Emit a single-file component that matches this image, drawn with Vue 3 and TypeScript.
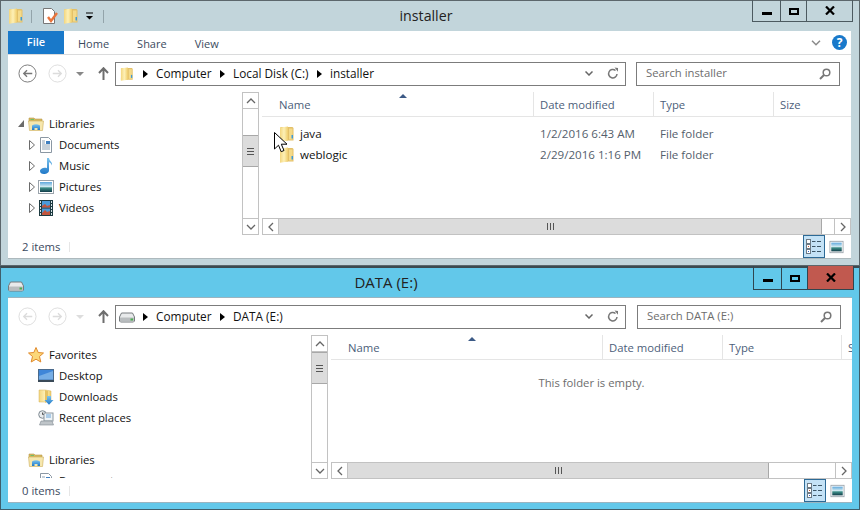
<script setup lang="ts">
interface Row { label: string; icon: string; level: 0 | 1; expander?: 'open' | 'closed'; gap?: boolean }
interface Win {
  id: string; title: string; quick: boolean; crumbIcon: string; crumbs: string[]; search: string;
  tree: Row[]; status: string; emptyMsg: string;
  files: { name: string; date: string; type: string }[];
  columns: string[]; forwardOnly: boolean;
}
const libs: Row[] = [
  { label: 'Libraries', icon: 'i-lib', level: 0, expander: 'open' },
  { label: 'Documents', icon: 'i-doc', level: 1, expander: 'closed' },
  { label: 'Music', icon: 'i-music', level: 1, expander: 'closed' },
  { label: 'Pictures', icon: 'i-pic', level: 1, expander: 'closed' },
  { label: 'Videos', icon: 'i-video', level: 1, expander: 'closed' },
];
const windows: Win[] = [
  {
    id: 'w1', title: 'installer', quick: true, crumbIcon: 'i-folder',
    crumbs: ['Computer', 'Local Disk (C:)', 'installer'], search: 'Search installer',
    tree: libs, status: '2 items', emptyMsg: '',
    files: [
      { name: 'java', date: '1/2/2016 6:43 AM', type: 'File folder' },
      { name: 'weblogic', date: '2/29/2016 1:16 PM', type: 'File folder' },
    ],
    columns: ['Name', 'Date modified', 'Type', 'Size'], forwardOnly: true,
  },
  {
    id: 'w2', title: 'DATA (E:)', quick: false, crumbIcon: 'i-drive',
    crumbs: ['Computer', 'DATA (E:)'], search: 'Search DATA (E:)',
    tree: [
      { label: 'Favorites', icon: 'i-star', level: 0 },
      { label: 'Desktop', icon: 'i-desktop', level: 1 },
      { label: 'Downloads', icon: 'i-down', level: 1 },
      { label: 'Recent places', icon: 'i-recent', level: 1 },
      { label: 'Libraries', icon: 'i-lib', level: 0, gap: true },
      { label: 'Documents', icon: 'i-doc', level: 1 },
    ],
    status: '0 items', emptyMsg: 'This folder is empty.', files: [],
    columns: ['Name', 'Date modified', 'Type', 'S'], forwardOnly: false,
  },
];
</script>

<template>
  <div class="desktop">
    <svg class="defs" aria-hidden="true">
      <defs>
        <linearGradient id="gf" x1="0" y1="0" x2="1" y2="0">
          <stop offset="0" stop-color="#f3d67f" /><stop offset=".5" stop-color="#fdf0b6" /><stop offset="1" stop-color="#efcd6c" />
        </linearGradient>
        <linearGradient id="gb" x1="0" y1="0" x2="0" y2="1">
          <stop offset="0" stop-color="#7cc4ee" /><stop offset="1" stop-color="#1f78c8" />
        </linearGradient>
        <linearGradient id="gl" x1="0" y1="0" x2="0" y2="1">
          <stop offset="0" stop-color="#5ea8dc" /><stop offset=".45" stop-color="#cfe8f0" /><stop offset=".6" stop-color="#3e8f88" /><stop offset="1" stop-color="#123d4a" />
        </linearGradient>
      </defs>
      <symbol id="i-folder" viewBox="0 0 16 16">
        <path d="M1.500 1h12l1 1v12.500h-13.500z" fill="#e3c068" />
        <path d="M1 1.500 9 .5V14.500l-8 1.200z" fill="url(#gf)" />
        <path d="M10 2.500h3.500v11H10z" fill="#f4da8a" />
        <path d="M12.500 9h1.500v3.500h-1.500z" fill="#3d9ad8" />
      </symbol>
      <symbol id="i-lib" viewBox="0 0 16 16">
        <path d="M1 2h5l1 1h7v3H1z" fill="#d9b860" stroke="#b99a4c" stroke-width=".6" />
        <path d="M2.500 3h3.500v1H2.500z" fill="#6fbf6a" />
        <path d="M.5 5h15l-1 9.500H1.500z" fill="#f6e7ae" stroke="#cfae5a" stroke-width=".6" />
        <path d="M4 9.500q4-2.500 8 0v4.500h-2.500v-2h-3v2H4z" fill="url(#gb)" />
      </symbol>
      <symbol id="i-doc" viewBox="0 0 16 16">
        <path d="M2.500 .5h8l3 3v12h-11z" fill="#fff" stroke="#8b97a3" />
        <path d="M4 4h3M4 6h3M4 8h8M4 10h8M4 12h8" stroke="#8fa3b5" fill="none" />
        <rect x="8" y="4" width="4" height="3" fill="#3f7fc0" />
      </symbol>
      <symbol id="i-music" viewBox="0 0 16 16">
        <path d="M9 0h2c.3 3 3.500 3.500 3 7.500-.6-2-2-3-3-3.200V12.500c0 2-2.500 3.500-5 3.500S2 14.700 2 13s2.500-3.200 5-3.200c.8 0 1.500.1 2 .4z" fill="url(#gb)" />
      </symbol>
      <symbol id="i-pic" viewBox="0 0 16 16">
        <rect x=".5" y="1.500" width="15" height="13" fill="#fff" stroke="#9aa3ab" />
        <rect x="2" y="3" width="12" height="10" fill="url(#gl)" />
      </symbol>
      <symbol id="i-video" viewBox="0 0 16 16">
        <rect x="1" y="0" width="14" height="16" fill="#1d3a40" />
        <path d="M2 1h1v2H2zM2 4h1v2H2zM2 7h1v2H2zM2 10h1v2H2zM2 13h1v2H2zM13 1h1v2h-1zM13 4h1v2h-1zM13 7h1v2h-1zM13 10h1v2h-1zM13 13h1v2h-1z" fill="#d5e3e8" />
        <rect x="4" y="1" width="8" height="6.500" fill="#4b9ad8" />
        <rect x="4" y="8.500" width="8" height="6.500" fill="#4b9ad8" />
        <path d="M4 6l3-2 2 2 3-1v2.500H4zM4 13l3-3 2 2 3-1v4H4z" fill="#c2553d" />
      </symbol>
      <symbol id="i-star" viewBox="0 0 16 16">
        <path d="M8 .5l2.200 5 5.300.5-4 3.500 1.300 5.500L8 12.200 3.200 15l1.300-5.500-4-3.500 5.300-.5z" fill="#fbd778" stroke="#e08a2c" />
      </symbol>
      <symbol id="i-desktop" viewBox="0 0 16 16">
        <rect x="0" y="1" width="16" height="12" fill="#4a6a8c" />
        <rect x="1" y="2" width="14" height="9.500" fill="#3f86d8" />
        <path d="M1 8 15 3v8.500H1z" fill="#76aee6" />
        <rect x="0" y="12" width="16" height="2" fill="#3a4a58" />
      </symbol>
      <symbol id="i-down" viewBox="0 0 16 16">
        <path d="M1 1h6l6 1v11H1z" fill="url(#gf)" stroke="#d5b25a" stroke-width=".5" />
        <path d="M7 1l3 1v10l-3 2z" fill="#e5c264" />
        <path d="M9 7h4v4h2.500L11 15.800 6.500 11H9z" fill="url(#gb)" />
      </symbol>
      <symbol id="i-recent" viewBox="0 0 16 16">
        <circle cx="4.500" cy="4.500" r="3.800" fill="#e9ecee" stroke="#7f8a92" />
        <path d="M4.500 2.500v2h2" stroke="#555" fill="none" />
        <rect x="6" y="3" width="9" height="8" fill="#eef3f6" stroke="#8d98a0" />
        <path d="M8 5h5M8 7h5" stroke="#6aa4d8" />
        <path d="M3 11h11l1.500 4H1.500z" fill="#bfc5c9" stroke="#7f8a92" stroke-width=".6" />
      </symbol>
      <symbol id="i-drive" viewBox="0 0 16 12">
        <path d="M2.500 2h11l2 4v4l-1 1H1.500l-1-1V6z" fill="#e8eaeb" stroke="#767b7e" />
        <rect x="1" y="6.500" width="14" height="4" fill="#b9bdbf" />
        <rect x="11.500" y="7.500" width="2.500" height="2" fill="#4caf50" />
      </symbol>
      <symbol id="i-details" viewBox="0 0 16 16">
        <g fill="#fff" stroke="#6d7a85"><rect x=".5" y=".5" width="4" height="4" /><rect x=".5" y="5.500" width="4" height="4" /><rect x=".5" y="10.500" width="4" height="4" /></g>
        <path d="M6 2.500h3.500M11 2.500h4M6 7.500h3.500M11 7.500h4M6 12.500h3.500M11 12.500h4" stroke="#3d5566" fill="none" />
        <rect x="2" y="7" width="1" height="1" fill="#c8552f" /><rect x="2" y="12" width="1" height="1" fill="#2f62c8" />
      </symbol>
    </svg>

    <section v-for="w in windows" :key="w.id" class="win" :class="w.id">
      <header class="titlebar">
        <div class="lead">
          <template v-if="w.quick">
            <svg class="ico qf"><use href="#i-folder" /></svg>
            <i class="qsep"></i>
            <svg class="qdoc" viewBox="0 0 16 16">
              <path d="M1.500 .5h8l3 3v12h-11z" fill="#fff" stroke="#777" />
              <path d="M6 9l3 4 6-8" fill="none" stroke="#e8743c" stroke-width="2.400" />
            </svg>
            <svg class="ico qf2"><use href="#i-folder" /></svg>
            <svg class="qmenu" viewBox="0 0 9 8"><path d="M1 1h7" stroke="#000" /><path d="M1 4h7L4.500 7.500z" fill="#000" /></svg>
            <i class="qsep last"></i>
          </template>
          <svg v-else class="tdrive"><use href="#i-drive" /></svg>
        </div>
        <h1 class="title">{{ w.title }}</h1>
        <div class="controls">
          <button class="cb min" aria-label="Minimize"><i></i></button>
          <button class="cb max" aria-label="Maximize"><i></i></button>
          <button class="cb close" aria-label="Close">
            <svg viewBox="0 0 10 9" width="10" height="9"><path d="M1 .5l8 8M9 .5l-8 8" stroke="#000" stroke-width="2.200" /></svg>
          </button>
        </div>
      </header>

      <div class="client">
        <nav v-if="w.quick" class="ribbon">
          <span class="tab file">File</span>
          <span class="tab">Home</span>
          <span class="tab">Share</span>
          <span class="tab">View</span>
          <svg class="rchev" viewBox="0 0 10 6"><path d="M1 .8l4 4 4-4" fill="none" stroke="#8a8a8a" stroke-width="1.500" /></svg>
          <span class="help">?</span>
        </nav>

        <div class="navbar">
          <svg class="navbtn" viewBox="0 0 20 20">
            <circle cx="10" cy="10" r="9" fill="#fff" :stroke="w.forwardOnly ? '#777' : '#dcdcdc'" />
            <path d="M15 10H6M9.500 6.500 6 10l3.500 3.500" fill="none" :stroke="w.forwardOnly ? '#777' : '#dcdcdc'" stroke-width="1.400" />
          </svg>
          <svg class="navbtn fwd" viewBox="0 0 20 20">
            <circle cx="10" cy="10" r="9" fill="#fff" stroke="#dcdcdc" />
            <path d="M5 10h9M10.500 6.500 14 10l-3.500 3.500" fill="none" stroke="#dcdcdc" stroke-width="1.400" />
          </svg>
          <svg class="drop" viewBox="0 0 8 4"><path d="M0 0h8L4 4z" :fill="w.forwardOnly ? '#888' : '#ddd'" /></svg>
          <svg class="upbtn" viewBox="0 0 11 13"><path d="M5.500 13V2M1 6l4.500-4.800L10 6" fill="none" stroke="#6e6e6e" stroke-width="2" /></svg>
          <div class="address">
            <svg class="addr-ico"><use :href="'#' + w.crumbIcon" /></svg>
            <template v-for="c in w.crumbs" :key="c">
              <i class="crumb-arrow"></i><span class="crumb">{{ c }}</span>
            </template>
            <span class="spacer"></span>
            <svg class="addr-chev" viewBox="0 0 8 5"><path d="M.5.500l3.500 3.500 3.500-3.500" fill="none" stroke="#666" stroke-width="1.500" /></svg>
            <svg class="refresh" viewBox="0 0 12 13"><path d="M10 7a4.200 4.200 0 1 1-1.500-3.500" fill="none" stroke="#777" stroke-width="1.500" /><path d="M7.500 .5 11 1v3.800z" fill="#777" /></svg>
          </div>
          <div class="search">
            <span>{{ w.search }}</span>
            <svg viewBox="0 0 12 12" width="12" height="12"><circle cx="7.500" cy="4.500" r="3.300" fill="none" stroke="#777" stroke-width="1.500" /><path d="M5 7l-4 4" stroke="#777" stroke-width="2" /></svg>
          </div>
        </div>

        <div class="main">
          <aside class="tree">
            <div v-for="r in w.tree" :key="r.label + r.level" class="node" :class="['lv' + r.level, { gap: r.gap }]">
              <svg v-if="r.expander" class="exp" :class="r.expander" viewBox="0 0 6 10">
                <path v-if="r.expander === 'closed'" d="M.5.500 5.500 5 .5 9.500z" fill="#fff" stroke="#6b6b6b" />
                <path v-else d="M0 8h6V1z" fill="#6b6b6b" />
              </svg>
              <svg class="ico"><use :href="'#' + r.icon" /></svg>
              <span>{{ r.label }}</span>
            </div>
          </aside>

          <div class="vscroll">
            <div class="sbtn"><svg viewBox="0 0 10 6" width="10" height="6"><path d="M1 5l4-4 4 4" fill="none" stroke="#666" stroke-width="1.300" /></svg></div>
            <div class="vtrack"><div class="vthumb"><i></i><i></i><i></i></div></div>
            <div class="sbtn"><svg viewBox="0 0 10 6" width="10" height="6"><path d="M1 1l4 4 4-4" fill="none" stroke="#666" stroke-width="1.300" /></svg></div>
          </div>

          <div class="pane">
            <div class="columns">
              <span v-for="c in w.columns" :key="c" class="col">{{ c }}</span>
              <i class="sort"></i>
            </div>
            <div class="files">
              <div v-for="f in w.files" :key="f.name" class="file-row">
                <span class="fname"><svg class="ico"><use href="#i-folder" /></svg>{{ f.name }}</span>
                <span class="meta">{{ f.date }}</span>
                <span class="meta">{{ f.type }}</span>
              </div>
              <p v-if="w.emptyMsg" class="empty">{{ w.emptyMsg }}</p>
            </div>
            <div class="hscroll">
              <div class="hbtn"><svg viewBox="0 0 6 10" width="6" height="10"><path d="M5 1 1 5l4 4" fill="none" stroke="#666" stroke-width="1.300" /></svg></div>
              <div class="hthumb"><i></i><i></i><i></i></div>
              <div class="hrest"></div>
              <div class="hbtn"><svg viewBox="0 0 6 10" width="6" height="10"><path d="M1 1l4 4-4 4" fill="none" stroke="#666" stroke-width="1.300" /></svg></div>
            </div>
          </div>
        </div>

        <footer class="status">
          <span class="count">{{ w.status }}</span>
          <i class="stsep"></i>
          <span class="spacer"></span>
          <span class="view on"><svg width="16" height="16"><use href="#i-details" /></svg></span>
          <span class="view"><svg width="15" height="14"><use href="#i-pic" /></svg></span>
        </footer>
      </div>

      <svg v-if="w.quick" class="cursor" viewBox="0 0 13 21" width="13" height="21">
        <path d="M.5.500V17l4-3.800 2.700 6.500 2.800-1.200-2.700-6.300H13z" fill="#fff" stroke="#000" />
      </svg>
    </section>
  </div>
</template>

<style>
html, body { margin: 0; background: #fff; }
</style>

<style scoped>
.desktop { position: relative; width: 860px; height: 510px; overflow: hidden; font-family: "Open Sans", "Noto Sans", sans-serif; font-size: 11.300px; color: #111; }
.defs { position: absolute; width: 0; height: 0; }
.ico { width: 16px; height: 16px; flex: none; }
.spacer { flex: 1; }

.win { position: absolute; left: 0; width: 860px; box-sizing: border-box; display: flex; flex-direction: column; border: 1px solid #5c676c; }
.w1 { top: 0; height: 266px; background: #c2d5db; padding: 0 8px 6px 7px; }
.w2 { top: 266px; height: 244px; background: #62c8ea; border-color: #3f5f6c; border-top: 2px solid #3b4a50; padding: 0 7px 6px 7px; }

.titlebar { display: flex; align-items: flex-start; flex: none; }
.w1 .titlebar { height: 30px; }
.w2 .titlebar { height: 29px; }
.lead { display: flex; align-items: center; flex: none; }
.w1 .lead { width: 92px; height: 30px; }
.w2 .lead { width: 11px; height: 29px; }
.qsep { width: 1px; height: 13px; flex: none; background: #93a4aa; margin: 0 10px 0 7px; }
.qsep.last { margin: 0 0 0 9px; }
.qdoc { width: 16px; height: 16px; flex: none; }
.qf2 { margin-left: 5px; }
.qmenu { width: 9px; height: 8px; margin-left: 6px; flex: none; }
.tdrive { width: 16px; height: 12px; flex: none; margin: 6px 0 0 0; }
.title { flex: 1; margin: 0; text-align: center; font-weight: 400; font-size: 14.200px; color: #222; line-height: 30px; }
.w2 .title { line-height: 29px; font-size: 15px; }

.controls { display: flex; flex: none; margin-top: -1px; border: 1px solid #4c5a60; border-top: none; }
.w1 .controls { margin-right: -2px; height: 21px; }
.w2 .controls { margin-top: -2px; margin-right: -2px; height: 23px; border-color: #2f4650; }
.cb { display: flex; align-items: center; justify-content: center; padding: 0; margin: 0; background: transparent; border: none; border-right: 1px solid #4c5a60; }
.w2 .cb { border-right-color: #2f4650; }
.cb.min { width: 28px; }
.cb.max { width: 26px; }
.cb.close { width: 45px; border-right: none; }
.w2 .cb.close { background: #c1594f; }
.min i { display: block; width: 10px; height: 3px; background: #000; margin-top: 6px; }
.max i { display: block; width: 6px; height: 3px; border: 2px solid #000; margin-top: 1px; }

.client { flex: 1; min-height: 0; display: flex; flex-direction: column; background: #fff; border-bottom: 1px solid #adb9bd; }
.w2 .client { border-top: 1px solid #9ab4c0; border-bottom-color: #9ab4c0; }

.ribbon { height: 23px; flex: none; display: flex; align-items: center; border-bottom: 1px solid #dadbdc; color: #3b4a5e; font-size: 11px; }
.tab { padding: 1px 14px 0; }
.tab.file { width: 56px; height: 23px; box-sizing: border-box; padding: 0; text-align: center; line-height: 22px; background: #1979ca; color: #fff; font-weight: 600; }
.rchev { width: 10px; height: 6px; margin-left: auto; }
.help { width: 15px; height: 15px; margin: 0 4px 0 11px; border-radius: 50%; background: #1979ca; color: #fff; font-weight: 700; font-size: 12px; line-height: 15px; text-align: center; }

.navbar { height: 37px; flex: none; display: flex; align-items: center; }
.navbtn { width: 19px; height: 19px; flex: none; margin-left: 10px; }
.navbtn.fwd { margin-left: 11px; }
.drop { width: 8px; height: 4px; flex: none; margin-left: 9px; }
.upbtn { width: 11px; height: 13px; flex: none; margin-left: 14px; }
.address { width: 511px; height: 24px; box-sizing: border-box; margin-left: 6px; flex: none; display: flex; align-items: center; background: #fff; border: 1px solid #7c7c7c; padding-left: 4px; }
.w2 .address { padding-left: 3px; }
.addr-ico { width: 14px; height: 16px; flex: none; }
.w2 .addr-ico { width: 16px; height: 12px; }
.crumb { font-size: 11.800px; margin-top: -2px; }
.crumb-arrow { width: 0; height: 0; flex: none; margin: 0 8px 0 9px; border-left: 5px solid #000; border-top: 4px solid transparent; border-bottom: 4px solid transparent; }
.w2 .crumb-arrow { margin-left: 8px; }
.crumb + .crumb-arrow, .w2 .crumb + .crumb-arrow { margin-left: 8.500px; }
.addr-chev { width: 8px; height: 5px; flex: none; margin-right: 14px; }
.refresh { width: 12px; height: 13px; flex: none; margin-right: 6px; }
.search { width: 204px; height: 24px; box-sizing: border-box; margin-left: 10px; flex: none; display: flex; align-items: center; justify-content: space-between; border: 1px solid #7c7c7c; padding: 0 8px 0 9px; color: #6d6d6d; }
.search span { margin-top: -2px; }
.w2 .search { margin-left: 11px; }

.main { flex: 1; min-height: 0; display: flex; }
.tree { flex: none; overflow: hidden; box-sizing: border-box; }
.w1 .tree { width: 234px; padding-top: 21px; }
.w2 .tree { width: 303px; padding-top: 9px; margin-bottom: 1px; }
.node { height: 21px; display: flex; align-items: center; position: relative; }
.node.lv0 { padding-left: 20px; }
.node.lv1 { padding-left: 30px; }
.node.gap { margin-top: 21px; }
.node .ico { margin-right: 5px; }
.exp { position: absolute; width: 6px; height: 10px; }
.lv0 .exp { left: 10px; }
.lv1 .exp { left: 21px; }

.vscroll { width: 17px; flex: none; box-sizing: border-box; display: flex; flex-direction: column; border-left: 1px solid #c2c2c2; border-right: 1px solid #c2c2c2; }
.sbtn { height: 17px; flex: none; box-sizing: border-box; display: flex; align-items: center; justify-content: center; border-top: 1px solid #c2c2c2; border-bottom: 1px solid #c2c2c2; }
.vtrack { flex: 1; }
.vthumb { height: 32px; margin: 26px 0 0; box-sizing: border-box; background: #dcdcdc; border-top: 1px solid #a8a8a8; border-bottom: 1px solid #a8a8a8; display: flex; flex-direction: column; align-items: center; justify-content: center; gap: 2px; }
.w2 .vthumb { margin-top: 0; }
.vthumb i { width: 7px; height: 1px; background: #555; }

.pane { flex: 1; min-width: 0; margin-left: 3px; display: flex; flex-direction: column; position: relative; }
.columns { height: 25px; flex: none; box-sizing: border-box; display: grid; border-bottom: 1px solid #e5e5e5; color: #4c607a; overflow: hidden; }
.w1 .columns, .w1 .file-row { grid-template-columns: 272px 120px 120px 1fr; }
.w2 .columns { grid-template-columns: 272px 120px 119px 1fr; }
.col { padding-left: 6px; line-height: 25px; border-right: 1px solid #e5e5e5; white-space: nowrap; }
.w2 .col { line-height: 26px; }
.col:first-child { padding-left: 17px; }
.col:last-of-type { border-right: none; }
.sort { position: absolute; top: 2px; left: 137px; width: 0; height: 0; border-left: 4px solid transparent; border-right: 4px solid transparent; border-bottom: 4px solid #3c5a86; }
.files { flex: 1; min-height: 0; padding-top: 6px; box-sizing: border-box; }
.file-row { display: grid; height: 21px; align-items: center; }
.fname { display: flex; align-items: center; gap: 5px; padding-left: 17px; font-size: 11.600px; }
.meta { padding-left: 6px; color: #54606c; font-size: 11.600px; }
.empty { margin: 9px 0 0; text-align: center; color: #6d6d6d; }
.hscroll { height: 17px; flex: none; box-sizing: border-box; display: flex; border-top: 1px solid #c2c2c2; border-bottom: 1px solid #c2c2c2; }
.hbtn { width: 17px; flex: none; box-sizing: border-box; display: flex; align-items: center; justify-content: center; border-left: 1px solid #c2c2c2; border-right: 1px solid #c2c2c2; }
.hthumb { flex: none; box-sizing: border-box; background: #dcdcdc; border-right: 1px solid #a8a8a8; display: flex; align-items: center; justify-content: center; gap: 2px; }
.w1 .hthumb { width: 543px; }
.w2 .hthumb { width: 421px; }
.hthumb i { width: 1px; height: 7px; background: #555; }
.hrest { flex: 1; }

.status { height: 23px; flex: none; display: flex; align-items: center; color: #3b4a5e; }
.count { padding-left: 14px; width: 47px; }
.stsep { width: 1px; height: 10px; background: #e6e6e6; }
.view { width: 22px; height: 23px; box-sizing: border-box; display: flex; align-items: center; justify-content: center; }
.view.on { background: #c4e2f6; border: 1px solid #2d6a96; }
.view:last-child { width: 15px; margin: 0 7px 0 4px; }

.cursor { position: absolute; left: 273px; top: 131px; }
</style>
